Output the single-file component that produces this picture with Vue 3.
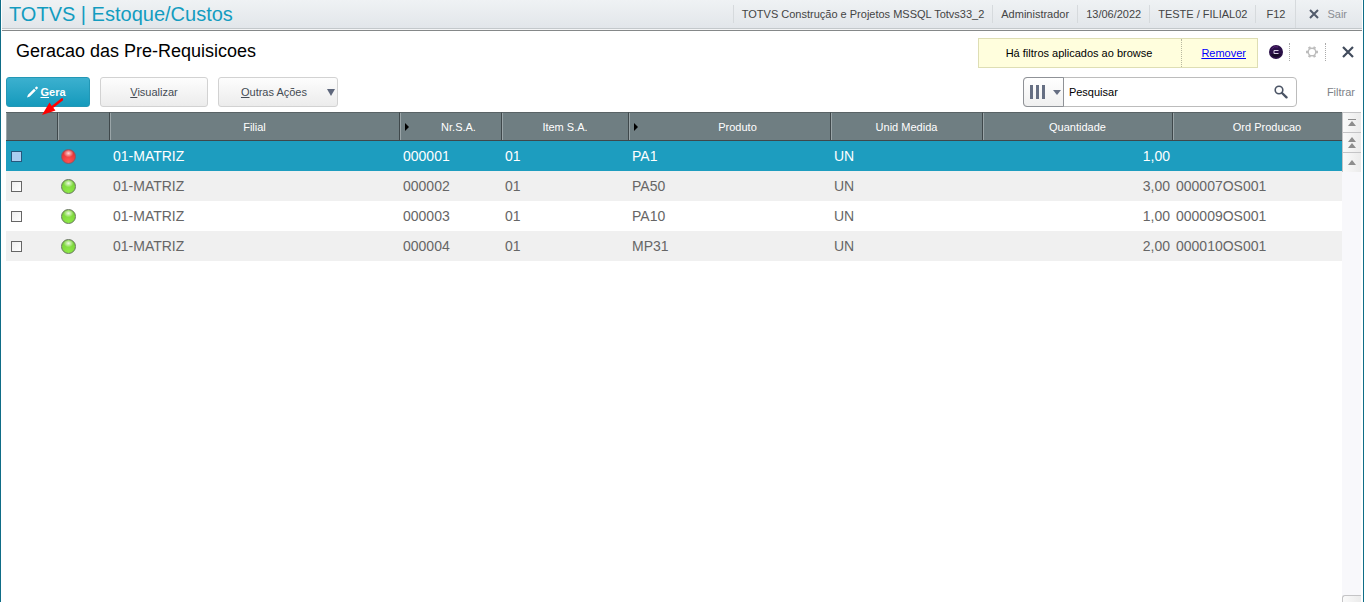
<script setup>
import { ref } from 'vue'

const session = ['TOTVS Construção e Projetos MSSQL Totvs33_2', 'Administrador', '13/06/2022', 'TESTE / FILIAL02']

const columns = [
  { key: 'branch', label: 'Filial' },
  { key: 'number', label: 'Nr.S.A.', sorted: true },
  { key: 'item', label: 'Item S.A.' },
  { key: 'product', label: 'Produto', sorted: true },
  { key: 'unit', label: 'Unid Medida' },
  { key: 'quantity', label: 'Quantidade', numeric: true },
  { key: 'order', label: 'Ord Producao' }
]

const rows = ref([
  { branch: '01-MATRIZ', number: '000001', item: '01', product: 'PA1', unit: 'UN', quantity: '1,00', order: '', status: 'red', checked: false },
  { branch: '01-MATRIZ', number: '000002', item: '01', product: 'PA50', unit: 'UN', quantity: '3,00', order: '000007OS001', status: 'green', checked: false },
  { branch: '01-MATRIZ', number: '000003', item: '01', product: 'PA10', unit: 'UN', quantity: '1,00', order: '000009OS001', status: 'green', checked: false },
  { branch: '01-MATRIZ', number: '000004', item: '01', product: 'MP31', unit: 'UN', quantity: '2,00', order: '000010OS001', status: 'green', checked: false }
])

const selected = ref(0)
const search = ref('Pesquisar')
</script>

<template>
  <div class="window">
    <header class="topbar">
      <h1>TOTVS | Estoque/Custos</h1>
      <ul class="session">
        <li v-for="entry in session" :key="entry">{{ entry }}</li>
        <li class="shortcut">F12</li>
        <li class="exit">
          <button type="button">
            <svg width="10" height="10" viewBox="0 0 10 10"><path d="M1 1L9 9M9 1L1 9" stroke="#525b6b" stroke-width="2" fill="none" /></svg>
            Sair
          </button>
        </li>
      </ul>
    </header>

    <main>
      <section class="heading">
        <h2>Geracao das Pre-Requisicoes</h2>
        <div class="notice">
          <span>Há filtros aplicados ao browse</span>
          <a href="#">Remover</a>
        </div>
        <div class="tools">
          <button type="button" class="tool profile" aria-label="Perfil">
            <svg width="14" height="14" viewBox="0 0 14 14">
              <circle cx="7" cy="7" r="7" fill="#2a1048" />
              <path d="M2 9A5.500 5.500 0 0 0 12 9" fill="#160a28" />
              <path d="M2.500 4A5.500 5.500 0 0 1 9 2" fill="none" stroke="#5b2379" />
              <path d="M9.500 5.500H5V8.500H9.500" fill="none" stroke="#d8cfe4" />
            </svg>
          </button>
          <button type="button" class="tool gear" aria-label="Configurações">
            <svg width="12" height="12" viewBox="0 0 12 12" fill="none" stroke="#bdbdbd">
              <circle cx="6" cy="6" r="3.800" stroke-width="1.400" />
              <path d="M10 6H12M8 9.460L9 11.200M4 9.460L3 11.200M2 6H0M4 2.540L3 .8M8 2.540L9 .8" stroke-width="2.400" />
            </svg>
          </button>
          <button type="button" class="tool close" aria-label="Fechar">
            <svg width="12" height="12" viewBox="0 0 12 12"><path d="M1 1L11 11M11 1L1 11" stroke="#414b5c" stroke-width="2.200" fill="none" /></svg>
          </button>
        </div>
      </section>

      <section class="actions">
        <button type="button" class="btn primary">
          <svg width="11" height="12" viewBox="0 0 11 12" fill="#fff"><path d="M0 11.500L1 8.800L7 2.800L8.800 4.600L2.800 10.500ZM7.800 2L9 .8Q9.800 .2 10.500 .9Q11.200 1.800 10.600 2.600L9.500 3.800Z" /></svg>
          <span><u>G</u>era</span>
          <svg class="pointer" width="21" height="18" viewBox="0 0 21 18"><path d="M20 1.500L11 8.500" stroke="#f00" stroke-width="2.600" stroke-linecap="round" /><path d="M0 17L7.500 4.500L9.800 8L13.500 12.500Z" fill="#f00" /></svg>
        </button>
        <button type="button" class="btn plain"><span><u>V</u>isualizar</span></button>
        <button type="button" class="btn plain more">
          <span><u>O</u>utras Ações</span>
          <svg width="8" height="7" viewBox="0 0 8 7"><path d="M0 0H8L4 7Z" fill="#5e677c" /></svg>
        </button>
        <form class="search" @submit.prevent>
          <button type="button" class="fields" aria-label="Campos de pesquisa">
            <svg width="16" height="14" viewBox="0 0 16 14" fill="#666f83"><path d="M0 0H3V14H0ZM6 0H9V14H6ZM12 0H15V14H12Z" /></svg>
            <svg width="8" height="5" viewBox="0 0 8 5"><path d="M0 0H8L4 5Z" fill="#666f83" /></svg>
          </button>
          <input v-model="search" type="text" aria-label="Pesquisar" />
          <button type="submit" class="find" aria-label="Buscar">
            <svg width="14" height="14" viewBox="0 0 14 14" fill="none" stroke="#4b5465"><circle cx="5" cy="5" r="3.800" stroke-width="1.600" /><path d="M8 8L12.500 12.300" stroke-width="2.400" stroke-linecap="round" /></svg>
          </button>
        </form>
        <button type="button" class="filter">Filtrar</button>
      </section>

      <section class="browse">
        <table>
          <colgroup>
            <col class="c-check" /><col class="c-status" />
            <col v-for="column in columns" :key="column.key" :class="'c-' + column.key" />
          </colgroup>
          <thead>
            <tr>
              <th></th>
              <th></th>
              <th v-for="column in columns" :key="column.key" :class="{ sorted: column.sorted }">
                <div>
                  <svg v-if="column.sorted" width="4" height="8" viewBox="0 0 4 8"><path d="M0 0L4 4L0 8Z" /></svg>
                  <span>{{ column.label }}</span>
                </div>
              </th>
            </tr>
          </thead>
          <tbody>
            <tr v-for="(row, index) in rows" :key="row.number" :class="{ selected: index === selected }" @click="selected = index">
              <td class="check"><input v-model="row.checked" type="checkbox" :aria-label="'Marcar ' + row.number" /></td>
              <td class="status"><i :class="row.status"></i></td>
              <td v-for="column in columns" :key="column.key" :class="{ numeric: column.numeric }">{{ row[column.key] }}</td>
            </tr>
          </tbody>
        </table>
        <nav class="scroller" aria-label="Rolagem">
          <button type="button" aria-label="Primeiro registro">
            <svg width="8" height="7" viewBox="0 0 8 7"><path d="M0 0H8V1H0ZM4 2L8 7H0Z" /></svg>
          </button>
          <button type="button" aria-label="Página anterior">
            <svg width="8" height="11" viewBox="0 0 8 11"><path d="M4 0L8 5H0ZM4 6L8 11H0Z" /></svg>
          </button>
          <button type="button" aria-label="Registro anterior">
            <svg width="8" height="5" viewBox="0 0 8 5"><path d="M4 0L8 5H0Z" /></svg>
          </button>
          <button type="button" class="down" aria-label="Próximo registro"></button>
        </nav>
      </section>
    </main>
  </div>
</template>

<style>
body {
  margin: 0;
  background: #fff;
}
</style>

<style scoped>
* {
  box-sizing: border-box;
}

.window {
  display: flex;
  flex-direction: column;
  min-height: 100vh;
  border: solid #0f6d87;
  border-width: 0 1px;
  color: #000;
  font: 11px/14px "Liberation Sans", Arial, sans-serif;
}

button,
input {
  margin: 0;
  padding: 0;
  border: 0;
  background: none;
  color: inherit;
  font: inherit;
}

svg {
  display: block;
  flex: none;
}

h1,
h2,
ul {
  margin: 0;
  padding: 0;
  font-weight: normal;
}

.topbar {
  display: flex;
  align-items: center;
  justify-content: space-between;
  height: 31px;
  padding: 0 0 3px 7px;
  margin: 0 1px;
  background: linear-gradient(#eff2f4, #e2e6ea 28px, #c3c8cb 28px, #c3c8cb 29px, #f4f5f6 29px, #f4f5f6 30px, #858889 30px);
}

h1 {
  color: #139cc0;
  font-size: 20px;
  line-height: 24px;
}

.session {
  display: flex;
  align-items: center;
  list-style: none;
  color: #444;
}

.session li {
  padding: 2px 8px;
  border-left: 1px solid #d6dadd;
}

.session .shortcut {
  padding: 2px 10px;
}

.session .exit {
  padding: 7px 15px 7px 13px;
}

.exit button {
  display: flex;
  align-items: center;
  gap: 8px;
  color: #8a8e93;
}

main {
  display: flex;
  flex: 1;
  flex-direction: column;
  padding: 7px 1px 0 5px;
}

.heading {
  display: flex;
  height: 39px;
  padding-left: 10px;
}

h2 {
  flex: 1;
  font-size: 18px;
  line-height: 26px;
}

.notice {
  display: flex;
  align-items: center;
  height: 30px;
  border: 1px solid #dedeb4;
  background: #fffedd;
}

.notice span {
  padding: 8px 29px 8px 27px;
  border-right: 1px dotted #b8b8a0;
  line-height: 12px;
}

.notice a {
  padding: 0 11px 0 19px;
  color: #00f;
}

.tools {
  display: flex;
  align-items: center;
  height: 28px;
}

.tool {
  display: flex;
  align-items: center;
  height: 18px;
}

.profile {
  padding: 0 6px 0 11px;
  border-right: 1px dotted #aaa;
}

.gear {
  padding: 0 7px 0 16px;
  border-right: 1px dotted #aaa;
}

.close {
  padding: 0 8px 0 16px;
}

.actions {
  display: flex;
  align-items: center;
  height: 30px;
  margin-bottom: 5px;
}

.btn {
  display: flex;
  align-items: center;
  justify-content: center;
  height: 30px;
  border-radius: 3px;
}

.primary {
  position: relative;
  gap: 2px;
  width: 84px;
  margin-right: 10px;
  padding-right: 3px;
  border: 1px solid #2397b5;
  background: linear-gradient(#3cb0cf, #159abc);
  color: #fff;
  font-weight: bold;
}

.pointer {
  position: absolute;
  top: 20px;
  left: 35px;
  z-index: 1;
}

.plain {
  width: 108px;
  margin-right: 10px;
  border: 1px solid #d2d2d2;
  background: linear-gradient(#fdfdfd, #ececec);
  color: #444b54;
}

.more {
  justify-content: flex-end;
  gap: 20px;
  width: 120px;
  padding-right: 2px;
}

.search {
  display: flex;
  align-items: center;
  width: 274px;
  height: 30px;
  margin-left: auto;
  border: 1px solid #bcbcbc;
  border-radius: 4px;
}

.fields {
  display: flex;
  align-items: center;
  gap: 7px;
  width: 41px;
  height: 30px;
  margin: -1px 0 -1px -1px;
  padding: 0 0 0 6px;
  border: 1px solid #8f9297;
  border-radius: 4px 0 0 4px;
  background: linear-gradient(#fff, #f0f0f0);
}

.search input {
  flex: 1;
  min-width: 0;
  padding-left: 5px;
  outline: 0;
}

.find {
  padding: 0 8px;
}

.filter {
  padding: 0 7px 0 30px;
  color: #7d8288;
}

.browse {
  display: flex;
  flex: 1;
  align-items: stretch;
}

table {
  flex: 1;
  align-self: flex-start;
  width: 0;
  border-collapse: separate;
  border-spacing: 0;
  table-layout: fixed;
}

.c-check,
.c-status {
  width: 52px;
}

.c-branch {
  width: 290px;
}

.c-number {
  width: 102px;
}

.c-item {
  width: 127px;
}

.c-product {
  width: 202px;
}

.c-unit {
  width: 152px;
}

.c-quantity {
  width: 190px;
}

th {
  height: 29px;
  padding: 0;
  border: solid #3f484b;
  border-width: 1px 1px 1px 0;
  border-top-color: #596366;
  background: #6f7e82;
  box-shadow: inset 1px 0 #9aa5a8;
  color: #fff;
  font-weight: normal;
}

th:last-child {
  padding-left: 19px;
  border-right: 0;
}

th div {
  display: flex;
  align-items: center;
}

th span {
  flex: 1;
  text-align: center;
}

.sorted div {
  padding-left: 5px;
  gap: 7px;
}

td {
  height: 30px;
  padding: 0 3px;
  color: #666;
  font-size: 14px;
  line-height: 16px;
}

tbody tr:nth-child(even) td {
  background: #f0f0f0;
}

tbody tr.selected td {
  background: #1d9dbf;
  color: #fff;
}

.numeric {
  text-align: right;
}

.check {
  padding-left: 5px;
}

.check input {
  display: block;
  width: 11px;
  height: 11px;
  margin-top: 1px;
  border: 1px solid #666;
  background: linear-gradient(135deg, #eee, #fff);
  appearance: none;
}

.selected .check input {
  border-color: #27577d;
  background: #abcdf0;
}

.check input:checked {
  background: #4b5465;
}

.status i {
  display: block;
  width: 15px;
  height: 15px;
  border: 1px solid #66775c;
  border-radius: 50%;
  background: radial-gradient(ellipse 5px 4px at 50% 25%, #effbe4, transparent), radial-gradient(circle at 50% 85%, #8eea48, #74cc35);
}

.status i.red {
  border-color: #855a66;
  background: radial-gradient(ellipse 5px 4px at 50% 25%, #ffd9d9, transparent), radial-gradient(circle at 50% 85%, #ff5252, #d9282c);
}

.scroller {
  display: flex;
  flex-direction: column;
  width: 19px;
  margin-right: 1px;
  background: #f8f8fb;
}

.scroller button {
  display: flex;
  align-items: center;
  justify-content: center;
  height: 20px;
  border: solid #c4c4c6;
  border-width: 0 0 1px 1px;
  background: linear-gradient(90deg, #fafafa, #ebebeb);
  fill: #8d8d8d;
}

.scroller button:first-child {
  height: 21px;
  border-top-width: 1px;
}

.scroller button:nth-child(3) {
  height: 19px;
  border-bottom: 0;
}

.scroller .down {
  height: 7px;
  margin-top: auto;
  border-width: 1px 0 0 1px;
  border-radius: 3px 0 0;
}
</style>
